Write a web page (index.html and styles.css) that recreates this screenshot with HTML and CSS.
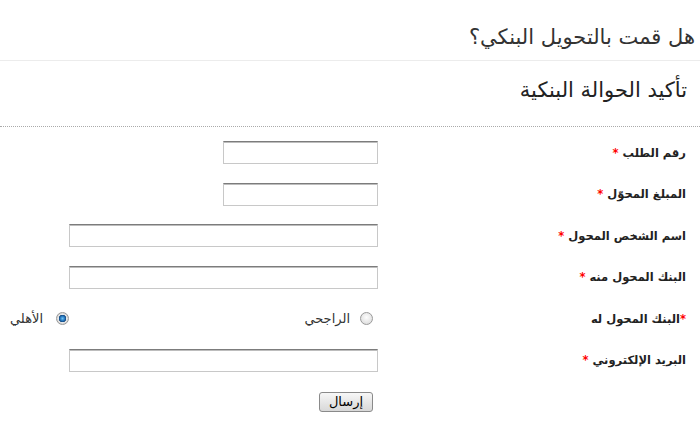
FILE: index.html
```html
<!DOCTYPE html>
<html lang="ar" dir="rtl">
<head>
    <meta charset="UTF-8">
    <meta name="viewport" content="width=device-width, initial-scale=1.0">
    <title>تأكيد الحوالة البنكية</title>
    <link rel="stylesheet" href="styles.css">
</head>
<body>
    <header class="page-head">
        <h1>هل قمت بالتحويل البنكي؟</h1>
    </header>

    <div class="section-head">
        <h2>تأكيد الحوالة البنكية</h2>
    </div>

    <form class="transfer-form" onsubmit="return false">
        <div class="row">
            <label for="order">رقم الطلب <span class="req">*</span></label>
            <div class="field"><input type="text" id="order" class="short"></div>
        </div>
        <div class="row">
            <label for="amount">المبلغ المحوّل <span class="req">*</span></label>
            <div class="field"><input type="text" id="amount" class="short"></div>
        </div>
        <div class="row">
            <label for="sender">اسم الشخص المحول <span class="req">*</span></label>
            <div class="field"><input type="text" id="sender" class="long"></div>
        </div>
        <div class="row">
            <label for="from-bank">البنك المحول منه <span class="req">*</span></label>
            <div class="field"><input type="text" id="from-bank" class="long"></div>
        </div>
        <div class="row">
            <label><span class="req">*</span>البنك المحول له</label>
            <div class="field radios">
                <label class="option"><input type="radio" name="bank" value="rajhi"> الراجحي</label>
                <label class="option"><input type="radio" name="bank" value="ahli" checked> الأهلي</label>
            </div>
        </div>
        <div class="row">
            <label for="email">البريد الإلكتروني <span class="req">*</span></label>
            <div class="field"><input type="text" id="email" class="long"></div>
        </div>
        <div class="row">
            <span></span>
            <div class="field"><button type="submit">إرسال</button></div>
        </div>
    </form>
</body>
</html>
```

FILE: styles.css
```css
body {
    margin: 0;
    font-family: "DejaVu Sans", sans-serif;
    background: #fff;
    color: #333;
}
.page-head {
    height: 60px;
    border-bottom: 1px solid #ececec;
    padding-right: 5px;
    display: flex;
    align-items: center;
}
.page-head h1 {
    margin: 14px 0 0;
    font-size: 21px;
    font-weight: normal;
    color: #333;
}
.section-head {
    height: 65px;
    border-bottom: 1px dotted #aaa;
    padding-right: 13px;
    display: flex;
    align-items: center;
}
.section-head h2 {
    margin: -8px 0 0;
    font-size: 21px;
    font-weight: normal;
    color: #222;
}
.transfer-form {
    padding-top: 5px;
}
.row {
    display: grid;
    grid-template-columns: 322px 1fr;
    align-items: center;
    height: 41.5px;
}
.row > label {
    padding-right: 14px;
    font-size: 11.5px;
    font-weight: bold;
    color: #222;
}
.req {
    color: #f00;
}
.field {
    display: flex;
}
input[type="text"] {
    box-sizing: border-box;
    height: 23px;
    margin: 0;
    padding: 2px 4px;
    border: 1px solid #c8c8c8;
    border-top-color: #7c7c7c;
    box-shadow: inset 0 1px 0 #bdbdbd;
    font-family: "DejaVu Sans", sans-serif;
    font-size: 12px;
}
.short {
    width: 155px;
}
.long {
    width: 309px;
}
.radios {
    justify-content: space-between;
    padding-right: 5px;
    padding-left: 10px;
}
.option {
    display: flex;
    align-items: center;
    gap: 10px;
    font-size: 13px;
    color: #333;
}
.option:last-child {
    gap: 13px;
}
.option input {
    appearance: none;
    -webkit-appearance: none;
    width: 13px;
    height: 13px;
    margin: 0;
    border: 1px solid #9a9a9a;
    border-radius: 50%;
    background: radial-gradient(circle at 50% 40%, #fdfdfd, #d6d6d6);
}
.option input:checked {
    background: radial-gradient(circle, #6ec3f4 0, #1f6fb7 2.5px, #11447a 3.5px, #e8e8e8 4px, #cfcfcf 6px);
}
button {
    width: 54px;
    height: 20px;
    margin-right: 5px;
    padding: 0;
    border: 1px solid #8a8a8a;
    border-radius: 3px;
    background: linear-gradient(#f7f7f7, #e7e7e7 50%, #d8d8d8);
    font-family: "DejaVu Sans", sans-serif;
    font-size: 13px;
    color: #000;
    cursor: pointer;
}
```
